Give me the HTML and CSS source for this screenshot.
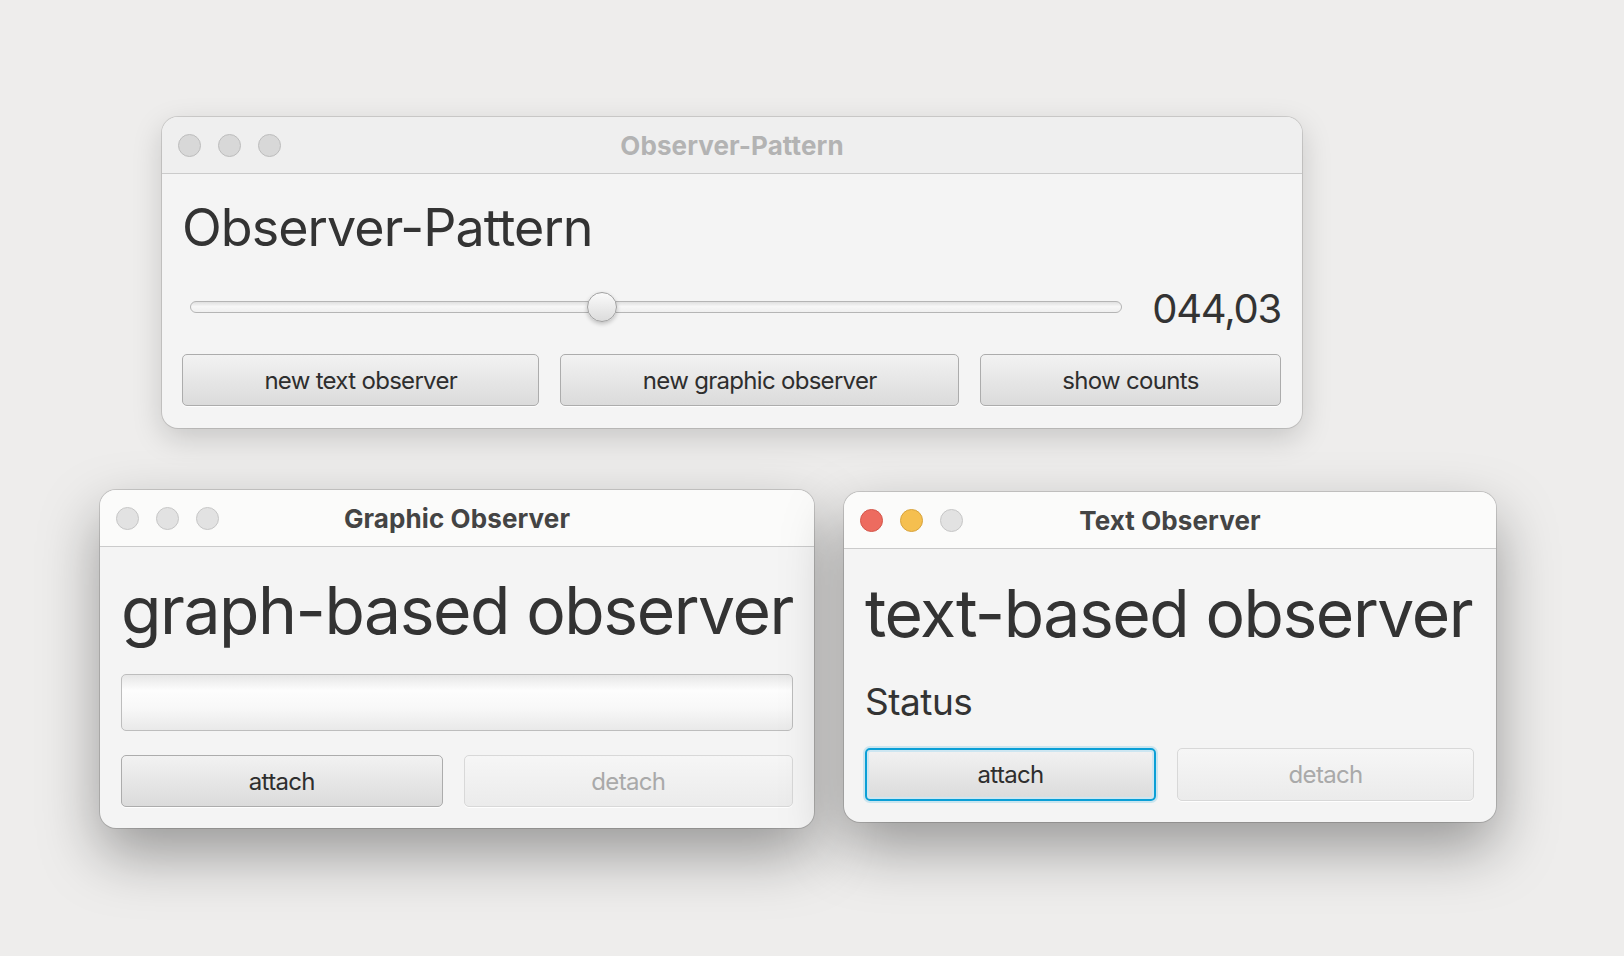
FILE: index.html
```html
<!DOCTYPE html>
<html lang="en">
<head>
<meta charset="utf-8">
<title>Observer-Pattern</title>
<link rel="stylesheet" href="styles.css">
</head>
<body>
<div class="desktop">

  <section class="window win-main">
    <header class="titlebar inactive">
      <div class="lights">
        <span class="light"></span><span class="light"></span><span class="light"></span>
      </div>
      <div class="title">Observer-Pattern</div>
      <div></div>
    </header>
    <div class="content main-content">
      <h1 class="heading-main">Observer-Pattern</h1>
      <div class="slider-row">
        <div class="slider">
          <div class="track"></div>
          <div class="thumb" style="--v: 0.4403"></div>
        </div>
        <div class="value">044,03</div>
      </div>
      <div class="btn-row">
        <button class="btn">new text observer</button>
        <button class="btn">new graphic observer</button>
        <button class="btn">show counts</button>
      </div>
    </div>
  </section>

  <section class="window win-graphic">
    <header class="titlebar light-bar">
      <div class="lights">
        <span class="light gray"></span><span class="light gray"></span><span class="light gray"></span>
      </div>
      <div class="title dark">Graphic Observer</div>
      <div></div>
    </header>
    <div class="content graphic-content">
      <h2 class="heading-big">graph-based observer</h2>
      <div class="field"></div>
      <div class="btn-row">
        <button class="btn">attach</button>
        <button class="btn disabled">detach</button>
      </div>
    </div>
  </section>

  <section class="window win-text">
    <header class="titlebar light-bar">
      <div class="lights">
        <span class="light red"></span><span class="light yellow"></span><span class="light gray"></span>
      </div>
      <div class="title dark">Text Observer</div>
      <div></div>
    </header>
    <div class="content text-content">
      <h2 class="heading-big">text-based observer</h2>
      <div class="status">Status</div>
      <div class="btn-row">
        <button class="btn focused">attach</button>
        <button class="btn disabled">detach</button>
      </div>
    </div>
  </section>

</div>
</body>
</html>
```

FILE: styles.css
```css
* { box-sizing: border-box; }

html, body {
  margin: 0;
  padding: 0;
}

body {
  background: #eeedec;
  font-family: "Inter", "Liberation Sans", sans-serif;
  color: #333333;
}

.desktop {
  position: relative;
  width: 1624px;
  height: 956px;
  overflow: hidden;
  background: #eeedec;
}

.window {
  position: absolute;
  background: #f4f4f4;
  border-radius: 16px;
  overflow: hidden;
  display: flex;
  flex-direction: column;
  box-shadow: 0 0 0 1px rgba(0,0,0,0.14), 0 26px 60px rgba(0,0,0,0.36);
}

.win-main {
  left: 162px;
  top: 117px;
  width: 1140px;
  height: 311px;
  box-shadow: 0 0 0 1px rgba(0,0,0,0.12), 0 10px 30px rgba(0,0,0,0.17);
}

.win-graphic {
  left: 100px;
  top: 490px;
  width: 714px;
  height: 338px;
}

.win-text {
  left: 844px;
  top: 492px;
  width: 652px;
  height: 330px;
}

/* Title bar */
.titlebar {
  height: 57px;
  flex: none;
  display: grid;
  grid-template-columns: 1fr auto 1fr;
  align-items: center;
  border-bottom: 1px solid #cbcbcb;
  background: #efefef;
}

.titlebar.light-bar {
  background: #fbfbfa;
}

.lights {
  display: flex;
  gap: 17px;
  padding-left: 16px;
}

.light {
  width: 23px;
  height: 23px;
  border-radius: 50%;
  background: #d8d8d8;
  border: 1px solid #bdbdbd;
}

.light.gray {
  background: #e2e2e2;
  border-color: #c6c6c6;
}

.light.red {
  background: #ed6b5f;
  border-color: #d4564a;
}

.light.yellow {
  background: #f5bf4f;
  border-color: #d8a33c;
}

.title {
  font-weight: 700;
  font-size: 26px;
  color: #b3b3b3;
  letter-spacing: 0.1px;
}

.title.dark {
  color: #444444;
}

/* Content */
.content {
  flex: 1;
  display: flex;
  flex-direction: column;
}

.main-content {
  padding: 21px 21px 21px 20px;
}

.heading-main {
  margin: 0;
  font-weight: 400;
  font-size: 52px;
  line-height: 66px;
  letter-spacing: -0.95px;
  color: #333333;
}

.slider-row {
  margin-top: 26px;
  height: 40px;
  display: flex;
  align-items: center;
  gap: 30px;
}

.slider {
  position: relative;
  flex: 1;
  height: 30px;
  margin-left: 8px;
  display: flex;
  align-items: center;
}

.track {
  width: 100%;
  height: 12px;
  border-radius: 6px;
  border: 1px solid #b5b5b5;
  background: linear-gradient(#e0e0e0, #f7f7f7 45%, #efefef);
}

.thumb {
  position: absolute;
  top: 0;
  left: calc(15px + (100% - 30px) * var(--v));
  width: 30px;
  height: 30px;
  margin-left: -15px;
  border-radius: 50%;
  border: 1px solid #a0a0a0;
  background: linear-gradient(#fafafa, #dcdcdc);
  box-shadow: 0 2px 4px rgba(0,0,0,0.22);
}

.value {
  font-size: 40px;
  line-height: 40px;
  margin-top: 3px;
  color: #333333;
  letter-spacing: -1.2px;
}

.btn-row {
  display: flex;
  gap: 21px;
}

.main-content .btn-row {
  margin-top: 27px;
}

.btn {
  flex: 1 1 auto;
  height: 52px;
  padding: 0;
  font-family: "Inter", "Liberation Sans", sans-serif;
  font-size: 24px;
  letter-spacing: -0.7px;
  color: #2e2e2e;
  border: 1px solid #acacac;
  border-radius: 5px;
  background: linear-gradient(#f2f2f2, #dbdbdb);
  box-shadow: 0 1px 0 rgba(255,255,255,0.9);
}

.btn.disabled {
  color: #a9a9a9;
  border-color: #d8d8d8;
  background: linear-gradient(#f6f6f6, #ebebeb);
}

.btn.focused {
  border: 2px solid #0a9fd6;
  box-shadow: inset 0 0 0 2px #cde6f1, 0 0 0 2px rgba(10,159,214,0.18);
}

/* Graphic observer */
.graphic-content {
  padding: 22px 21px 21px 21px;
}

.heading-big {
  margin: 0;
  font-weight: 400;
  font-size: 66px;
  line-height: 82px;
  letter-spacing: -1.45px;
  color: #333333;
  white-space: nowrap;
}

.field {
  margin-top: 23px;
  height: 57px;
  border: 1px solid #bdbdbd;
  border-radius: 5px;
  background: linear-gradient(#e6e6e6 0%, #fdfdfd 28%, #f8f8f8 60%, #e9e9e9 100%);
}

.graphic-content .btn-row {
  margin-top: 24px;
}

/* Text observer */
.text-content {
  padding: 23px 22px 21px 21px;
}

.status {
  margin-top: 25px;
  font-size: 37px;
  line-height: 46px;
  letter-spacing: -0.5px;
  color: #333333;
}

.text-content .btn-row {
  margin-top: 23px;
}

.text-content .btn {
  height: 53px;
}
```
